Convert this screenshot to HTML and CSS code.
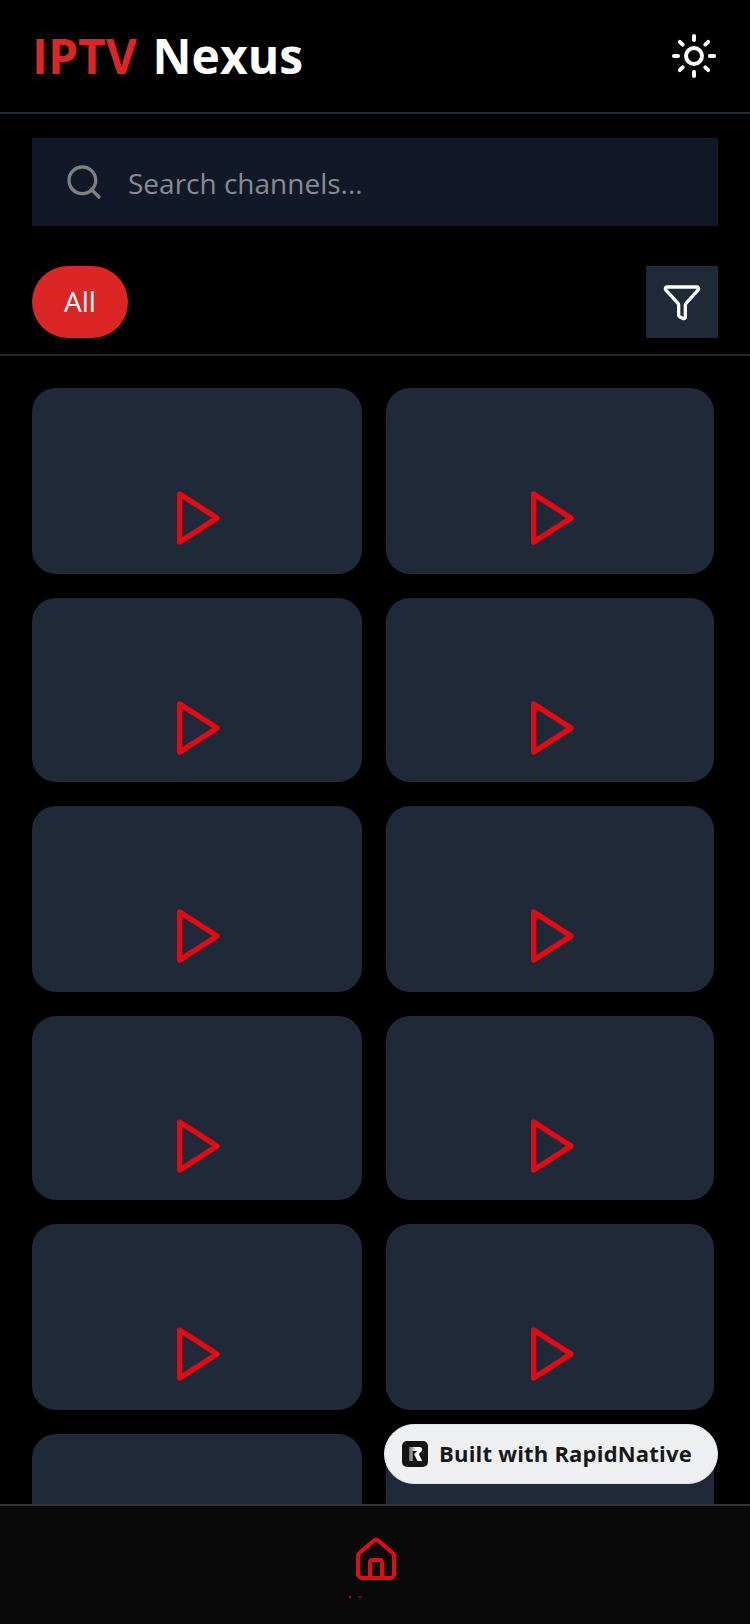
FILE: index.html
```html
<!DOCTYPE html>
<html lang="en">
<head>
<meta charset="utf-8">
<title>IPTV Nexus</title>
<link rel="stylesheet" href="styles.css">
</head>
<body>
<div class="app">
  <header class="header">
    <h1 class="title"><span class="title-accent">IPTV</span> Nexus</h1>
    <svg class="icon-sun" viewBox="0 0 24 24" width="48" height="48" fill="none" stroke="currentColor" stroke-width="2" stroke-linecap="round" stroke-linejoin="round"><circle cx="12" cy="12" r="4"/><path d="M12 2v2"/><path d="M12 20v2"/><path d="m4.93 4.93 1.41 1.41"/><path d="m17.66 17.66 1.41 1.41"/><path d="M2 12h2"/><path d="M20 12h2"/><path d="m6.34 17.66-1.41 1.41"/><path d="m19.07 4.93-1.41 1.41"/></svg>
  </header>
  <div class="search-wrap">
    <div class="search">
      <svg class="icon-search" viewBox="0 0 24 24" width="40" height="40" fill="none" stroke="currentColor" stroke-width="2" stroke-linecap="round" stroke-linejoin="round"><path d="m21 21-4.34-4.34"/><circle cx="11" cy="11" r="8"/></svg>
      <span class="placeholder">Search channels...</span>
    </div>
  </div>
  <div class="filters">
    <span class="pill">All</span>
    <span class="filter-btn">
      <svg viewBox="0 0 24 24" width="40" height="40" fill="none" stroke="currentColor" stroke-width="2" stroke-linecap="round" stroke-linejoin="round"><path d="M10 20a1 1 0 0 0 .553.895l2 1A1 1 0 0 0 14 21v-7a2 2 0 0 1 .517-1.341L21.74 4.67A1 1 0 0 0 21 3H3a1 1 0 0 0-.742 1.67l7.225 7.989A2 2 0 0 1 10 14z"/></svg>
    </span>
  </div>
  <main class="grid-area">
    <div class="grid">
      <div class="card"><svg class="play" viewBox="0 0 24 24" width="64" height="64"><polygon points="5.5 3 19.5 12 5.5 21 5.5 3"/></svg></div>
      <div class="card"><svg class="play" viewBox="0 0 24 24" width="64" height="64"><polygon points="5.5 3 19.5 12 5.5 21 5.5 3"/></svg></div>
      <div class="card"><svg class="play" viewBox="0 0 24 24" width="64" height="64"><polygon points="5.5 3 19.5 12 5.5 21 5.5 3"/></svg></div>
      <div class="card"><svg class="play" viewBox="0 0 24 24" width="64" height="64"><polygon points="5.5 3 19.5 12 5.5 21 5.5 3"/></svg></div>
      <div class="card"><svg class="play" viewBox="0 0 24 24" width="64" height="64"><polygon points="5.5 3 19.5 12 5.5 21 5.5 3"/></svg></div>
      <div class="card"><svg class="play" viewBox="0 0 24 24" width="64" height="64"><polygon points="5.5 3 19.5 12 5.5 21 5.5 3"/></svg></div>
      <div class="card"><svg class="play" viewBox="0 0 24 24" width="64" height="64"><polygon points="5.5 3 19.5 12 5.5 21 5.5 3"/></svg></div>
      <div class="card"><svg class="play" viewBox="0 0 24 24" width="64" height="64"><polygon points="5.5 3 19.5 12 5.5 21 5.5 3"/></svg></div>
      <div class="card"><svg class="play" viewBox="0 0 24 24" width="64" height="64"><polygon points="5.5 3 19.5 12 5.5 21 5.5 3"/></svg></div>
      <div class="card"><svg class="play" viewBox="0 0 24 24" width="64" height="64"><polygon points="5.5 3 19.5 12 5.5 21 5.5 3"/></svg></div>
      <div class="card"></div>
      <div class="card"></div>
    </div>
  </main>
  <nav class="nav">
    <svg class="icon-home" viewBox="0 0 24 24" width="48" height="48" fill="none" stroke="currentColor" stroke-width="2" stroke-linecap="round" stroke-linejoin="round"><path d="M15 21v-8a1 1 0 0 0-1-1h-4a1 1 0 0 0-1 1v8"/><path d="M3 10a2 2 0 0 1 .709-1.528l7-5.999a2 2 0 0 1 2.582 0l7 5.999A2 2 0 0 1 21 10v9a2 2 0 0 1-2 2H5a2 2 0 0 1-2-2z"/></svg>
    <div class="nav-dots"><i class="dot"></i><i class="dot"></i></div>
  </nav>
  <div class="badge">
    <svg class="badge-logo" viewBox="0 0 26 26" width="26" height="26"><defs><linearGradient id="rg" x1="0" y1="0" x2="1" y2="0"><stop offset="0" stop-color="#666"/><stop offset="0.55" stop-color="#fff"/></linearGradient></defs><rect width="26" height="26" rx="5" fill="#141414"/><path d="M7 6h10.5a2.5 2.5 0 0 1 2 4.2L16.8 13l3.4 7h-4.8l-3.4-7 3.2-3H10.6v10H7z" fill="url(#rg)"/></svg>
    <span class="badge-text">Built with RapidNative</span>
  </div>
</div>
</body>
</html>
```

FILE: styles.css
```css
* { box-sizing: border-box; }

html, body {
  margin: 0;
  padding: 0;
  background: #000;
}

body {
  font-family: "Open Sans", "Noto Sans", sans-serif;
}

.app {
  position: relative;
  display: flex;
  flex-direction: column;
  width: 750px;
  height: 1624px;
  overflow: hidden;
  background: #000;
}

.header {
  flex: none;
  display: flex;
  align-items: center;
  justify-content: space-between;
  height: 114px;
  padding: 0 32px 0 32px;
  border-bottom: 2px solid #1f2937;
}

.title {
  margin: 0;
  font-size: 48px;
  line-height: 1;
  font-weight: 700;
  color: #fff;
  word-spacing: 3px;
}

.title-accent { color: #dc2626; }

.icon-sun { color: #fff; }

.search-wrap {
  flex: none;
  padding: 24px 32px 0;
}

.search {
  display: flex;
  align-items: center;
  gap: 24px;
  height: 88px;
  padding-left: 32px;
  background: #111827;
}

.icon-search { color: #808080; flex: none; }

.placeholder {
  padding-top: 2px;
  font-size: 28px;
  color: #878c94;
}

.filters {
  flex: none;
  display: flex;
  align-items: center;
  justify-content: space-between;
  height: 130px;
  padding: 40px 32px 16px;
  border-bottom: 2px solid #27272a;
}

.pill {
  display: flex;
  align-items: center;
  justify-content: center;
  width: 96px;
  height: 72px;
  padding-bottom: 2px;
  border-radius: 36px;
  background: #dc2626;
  color: #fff;
  font-size: 28px;
}

.filter-btn {
  display: flex;
  align-items: center;
  justify-content: center;
  width: 72px;
  height: 72px;
  background: #1f2937;
  color: #fff;
}

.grid-area {
  flex: 1;
  min-height: 0;
  overflow: hidden;
  padding: 32px 0 0 32px;
}

.grid {
  display: grid;
  grid-template-columns: 330px 328px;
  grid-template-rows: 186px 184px 186px 184px 186px 186px;
  gap: 24px;
}

.card {
  display: flex;
  align-items: flex-start;
  justify-content: center;
  padding-top: 98px;
  border-radius: 24px;
  background: #1f2937;
}

.card:nth-child(even) { padding-left: 2px; }

.play {
  fill: none;
  stroke: #e50914;
  stroke-width: 2;
  stroke-linecap: round;
  stroke-linejoin: round;
}

.nav {
  flex: none;
  display: flex;
  flex-direction: column;
  align-items: center;
  height: 120px;
  padding-top: 30px;
  padding-left: 2px;
  background: #0a0a0a;
  border-top: 2px solid #333;
  color: #e50914;
}

.icon-home { flex: none; }

.nav-dots {
  display: flex;
  gap: 8px;
  margin-top: 12px;
  margin-right: 42px;
}

.dot {
  display: block;
  width: 2px;
  height: 2px;
  border-radius: 50%;
  background: #e50914;
}

.badge {
  position: absolute;
  left: 384px;
  top: 1424px;
  display: flex;
  align-items: center;
  gap: 11px;
  width: 334px;
  height: 60px;
  padding-left: 17px;
  border-radius: 30px;
  background: #eeeff1;
  border: 1px solid #e2e5ea;
}

.badge-logo { flex: none; }

.badge-text {
  padding-bottom: 2px;
  font-size: 22px;
  font-weight: 700;
  letter-spacing: 0.2px;
  color: #18181b;
  white-space: nowrap;
}
```
